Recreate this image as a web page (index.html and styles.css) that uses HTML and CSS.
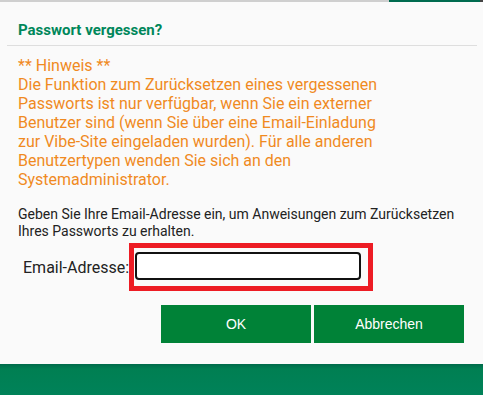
FILE: index.html
```html
<!DOCTYPE html>
<html lang="de">
<head>
    <meta charset="UTF-8">
    <meta name="viewport" content="width=device-width, initial-scale=1.0">
    <title>Passwort vergessen?</title>
    <link rel="stylesheet" href="styles.css">
</head>
<body>
    <div class="page-strip">
        <div class="strip-grey"></div>
        <div class="strip-green"></div>
        <div class="strip-corner"></div>
    </div>

    <div class="dialog">
        <div class="dialog-header">
            <h1>Passwort vergessen?</h1>
        </div>

        <div class="dialog-body">
            <p class="notice">** Hinweis **<br>
                Die Funktion zum Zurücksetzen eines vergessenen Passworts ist nur verfügbar, wenn Sie ein externer Benutzer sind (wenn Sie über eine Email-Einladung zur Vibe-Site eingeladen wurden). Für alle anderen Benutzertypen wenden Sie sich an den Systemadministrator.</p>

            <p class="instructions">Geben Sie Ihre Email-Adresse ein, um Anweisungen zum Zurücksetzen Ihres Passworts zu erhalten.</p>

            <div class="form-row">
                <label for="email">Email-Adresse:</label>
                <div class="highlight">
                    <input type="text" id="email" autofocus>
                </div>
            </div>
        </div>

        <div class="dialog-footer">
            <button>OK</button>
            <button>Abbrechen</button>
        </div>
    </div>

    <div class="page-band"></div>
</body>
</html>
```

FILE: styles.css
```css
html, body {
    margin: 0;
    padding: 0;
}
body {
    font-family: Roboto, "Liberation Sans", sans-serif;
    background: #fafafa;
    width: 483px;
    height: 395px;
    overflow: hidden;
}
.page-strip {
    display: flex;
    height: 2px;
}
.strip-grey {
    width: 389px;
    background: #cfcfcf;
}
.strip-green {
    flex: 1;
    background: #006b4f;
}
.strip-corner {
    width: 3px;
    background: #444;
}
.dialog {
    background: #fafafa;
    height: 362px;
    overflow: hidden;
}
.dialog-header {
    margin: 0 6px 0 7px;
    padding: 0 0 0 11px;
    height: 44px;
    border-bottom: 1px solid #dedede;
    box-sizing: border-box;
}
.dialog-header h1 {
    margin: 0;
    padding-top: 18px;
    font-size: 15px;
    line-height: 20px;
    font-weight: bold;
    color: #00875a;
}
.dialog-body {
    padding: 0 18px;
}
.notice {
    width: 375px;
    margin: 0;
    padding-top: 10px;
    font-size: 16px;
    line-height: 19px;
    color: #f08a1f;
}
.instructions {
    margin: 17px 0 0;
    font-size: 14px;
    line-height: 17px;
    color: #222;
}
.form-row {
    display: flex;
    align-items: center;
    margin-top: 3px;
    padding-left: 5px;
}
.form-row label {
    font-size: 16px;
    color: #222;
}
.highlight {
    border: 5px solid #ed1c24;
    padding: 4px 7px 6px 1px;
}
.highlight input {
    display: block;
    width: 226px;
    height: 28px;
    box-sizing: border-box;
    border: 2px solid #111;
    border-radius: 4px;
    background: #fff;
    outline: none;
    font-size: 14px;
    padding: 0 4px;
}
.dialog-footer {
    display: flex;
    justify-content: flex-end;
    gap: 3px;
    margin-top: 14px;
    padding-right: 19px;
}
.dialog-footer button {
    width: 150px;
    height: 38px;
    border: none;
    background: #008237;
    color: #fff;
    font-family: "Liberation Sans", Arial, sans-serif;
    font-size: 14px;
    cursor: pointer;
}
.page-band {
    height: 31px;
    background: linear-gradient(to bottom, #006a4a 0px, #007f52 5px, #008259 100%);
}
```
